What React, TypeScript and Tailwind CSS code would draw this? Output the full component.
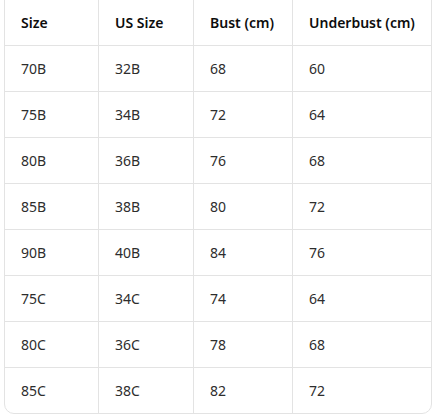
const header = ["Size", "US Size", "Bust (cm)", "Underbust (cm)"];

const rows = [
  ["70B", "32B", "68", "60"],
  ["75B", "34B", "72", "64"],
  ["80B", "36B", "76", "68"],
  ["85B", "38B", "80", "72"],
  ["90B", "40B", "84", "76"],
  ["75C", "34C", "74", "64"],
  ["80C", "36C", "78", "68"],
  ["85C", "38C", "82", "72"],
];

export default function App() {
  return (
    <div className="h-[414px] w-[432px] overflow-hidden bg-white font-['Noto_Sans',sans-serif]">
      <div className="ml-1 mt-[-1px] w-[428px] overflow-hidden rounded-b-[10px] border border-[#e3e3e3]">
        <div className="grid grid-cols-[94px_95px_99px_1fr] border-b border-[#e3e3e3]">
          {header.map((h, i) => (
            <div
              key={h}
              className={`flex h-[45px] items-center px-4 text-[14px] font-semibold text-[#0d0d0d] ${i < 3 ? "border-r border-[#e3e3e3]" : ""}`}
            >
              {h}
            </div>
          ))}
        </div>
        {rows.map((r, ri) => (
          <div
            key={ri}
            className={`grid grid-cols-[94px_95px_99px_1fr] ${ri < rows.length - 1 ? "border-b border-[#e3e3e3]" : ""}`}
          >
            {r.map((c, i) => (
              <div
                key={i}
                className={`flex h-[45px] items-center px-4 text-[14px] text-[#2d2d2d] ${i < 3 ? "border-r border-[#e3e3e3]" : ""}`}
              >
                {c}
              </div>
            ))}
          </div>
        ))}
      </div>
    </div>
  );
}
